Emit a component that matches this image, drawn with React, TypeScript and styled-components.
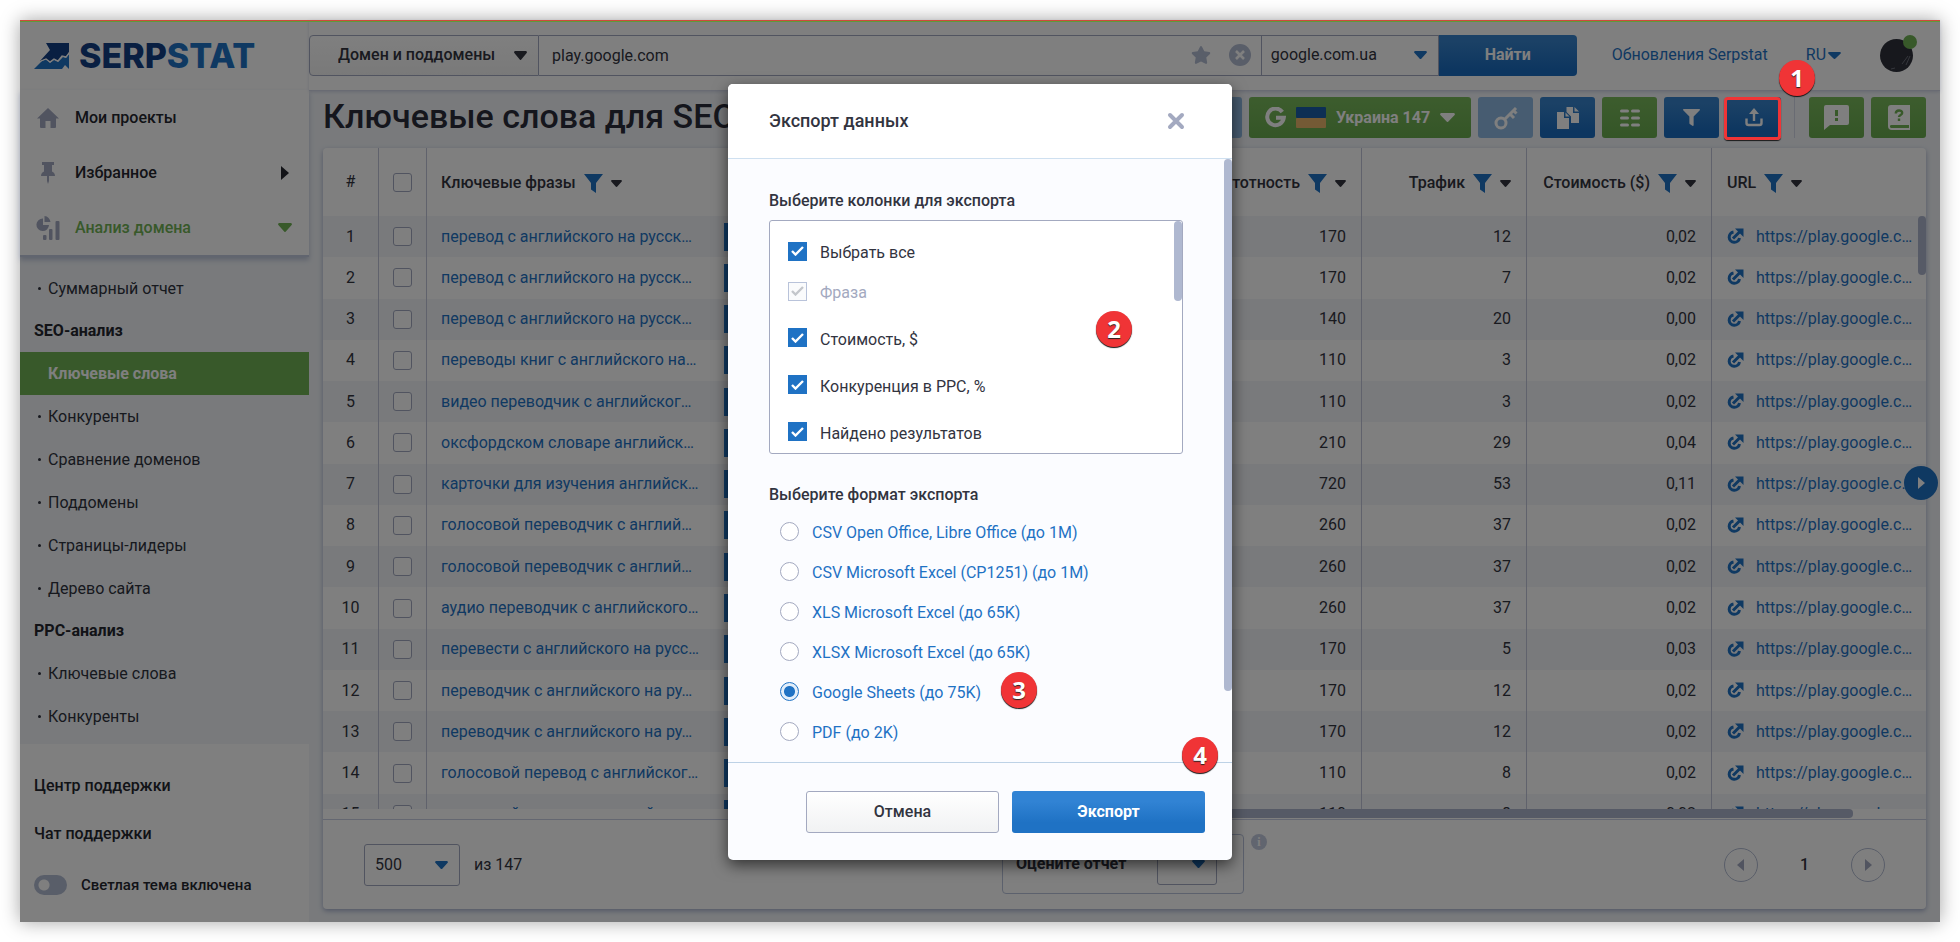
import React from "react";
import styled, { createGlobalStyle, css } from "styled-components";
import { FaStar, FaFilter } from "react-icons/fa";

const c = {
  text: "#32343f",
  muted: "#a3a9c0",
  line: "#d3d7e6",
  blue: "#1f72c4",
  green: "#70b254",
  page: "#f2f5f9",
};

const GlobalStyle = createGlobalStyle`
  *, *::before, *::after { box-sizing: border-box; }
  body { margin: 0; background: #fff; color: ${c.text}; font: 400 16px/20px Roboto, "Liberation Sans", sans-serif; }
  button, input, select { font: inherit; color: inherit; }
  button { cursor: pointer; padding: 0; border: 0; background: none; }
  a { color: ${c.blue}; text-decoration: none; }
  h1, h2, p, ul { margin: 0; padding: 0; }
  ul { list-style: none; }
`;

const Frame = styled.div`
  position: relative;
  display: flex;
  height: calc(100vh - 40px);
  margin: 20px;
  background: ${c.page};
  box-shadow: 0 0 18px rgba(0, 0, 0, 0.36);
`;

const Sidebar = styled.aside`
  display: flex;
  flex-direction: column;
  flex: 0 0 289px;
  background: #fff;
  > * { flex: none; }
`;

const Logo = styled.a`
  display: flex;
  align-items: center;
  gap: 9px;
  height: 70px;
  padding: 2px 14px 0;
  font: 800 34px/40px Inter, Roboto, sans-serif;
  color: #123f85;
  svg { flex: none; }
  b { font-weight: 800; color: #1f72c4; }
`;

const MainNav = styled.nav`
  border-bottom: 2px solid #c3cade;
  box-shadow: 0 3px 5px rgba(110, 125, 170, 0.4);
  z-index: 1;
`;

const MainLink = styled.a<{ $active?: boolean }>`
  display: flex;
  align-items: center;
  height: 55px;
  padding: 0 17px 0 16px;
  font-weight: 500;
  color: ${(p) => (p.$active ? c.green : "#25272f")};
  > svg { flex: 0 0 24px; margin-right: 15px; color: ${c.muted}; }
  > span { flex: 1; }
`;

const ArrowSlot = styled.i`
  display: flex;
  justify-content: center;
  width: 14px;
`;

const SubNav = styled.nav`
  height: 487px;
  padding-top: 10px;
  background: ${c.page};
`;

const SubTitle = styled.h2`
  padding: 0 14px;
  font: 700 16px/42px Roboto, sans-serif;
  color: #25272f;
`;

const SubLink = styled.a<{ $active?: boolean }>`
  display: flex;
  align-items: center;
  height: 43px;
  padding-left: 18px;
  color: #2f323d;
  &::before { content: ""; width: 3px; height: 3px; margin-right: 7px; border-radius: 50%; background: currentColor; }
  ${(p) => p.$active && css`
    color: #fff;
    font-weight: 700;
    background: ${c.green};
    &::before { background: transparent; }
  `}
`;

const Support = styled.div`
  display: flex;
  flex-direction: column;
  padding: 18px 14px 0;
  a { font-weight: 500; line-height: 48px; color: #25272f; }
`;

const Toggle = styled.label`
  display: flex;
  align-items: center;
  gap: 14px;
  height: 54px;
  font-weight: 500;
  font-size: 15px;
  color: #25272f;
  input {
    appearance: none;
    width: 33px;
    height: 20px;
    margin: 0;
    border-radius: 10px;
    background: radial-gradient(circle at 10px 10px, #fff 5px, #b3bcd2 6px);
  }
`;

const Main = styled.main`
  display: flex;
  flex-direction: column;
  flex: 1;
  min-width: 0;
`;

const Header = styled.header`
  display: flex;
  align-items: center;
  height: 71px;
  padding-right: 27px;
  background: #fff;
  border-bottom: 1px solid ${c.line};
  box-shadow: 0 1px 3px rgba(110, 125, 170, 0.25);
`;

const Search = styled.form`
  display: flex;
  flex: 1;
  height: 41px;
  margin-right: 35px;
`;

const selectBase = css`
  appearance: none;
  border: 1px solid ${c.muted};
  border-radius: 0;
  background: #fff;
  outline: 0;
`;

const SelectWrap = styled.div`
  position: relative;
  display: flex;
  > svg { position: absolute; right: 12px; top: 50%; margin-top: -4px; pointer-events: none; }
`;

const ScopeSelect = styled.select`
  ${selectBase}
  width: 230px;
  padding: 0 28px;
  font-weight: 500;
  border-radius: 4px 0 0 4px;
  background: linear-gradient(#fff, #f3f3f3);
`;

const Query = styled.div`
  display: flex;
  align-items: center;
  flex: 1;
  gap: 18px;
  padding-right: 10px;
  border: solid ${c.muted};
  border-width: 1px 0;
  background: #fff;
  color: #b3bcd2;
  input { flex: 1; min-width: 0; height: 100%; padding: 0 13px; border: 0; background: none; outline: 0; color: ${c.text}; }
  button { display: flex; color: inherit; }
`;

const EngineSelect = styled.select`
  ${selectBase}
  width: 178px;
  padding: 0 9px;
`;

const SubmitButton = styled.button`
  width: 138px;
  border-radius: 0 4px 4px 0;
  background: linear-gradient(#3783cc 15%, #1a6cc0 85%);
  color: #fff;
  font-weight: 700;
`;

const Lang = styled.button`
  display: flex;
  align-items: center;
  gap: 2px;
  margin: 0 39px 0 38px;
  color: ${c.blue};
`;

const Avatar = styled.div`
  position: relative;
  width: 33px;
  height: 33px;
  svg { display: block; }
  &::after { content: ""; position: absolute; right: -4px; top: -4px; width: 14px; height: 14px; border-radius: 50%; background: ${c.green}; }
`;

const Content = styled.div`
  position: relative;
  display: flex;
  flex-direction: column;
  flex: 1;
  min-height: 0;
  padding: 0 14px 13px;
`;

const TitleRow = styled.div`
  display: flex;
  align-items: center;
  flex: 0 0 57px;
  gap: 7px;
  padding-bottom: 4px;
  h1 { flex: 1; min-width: 0; height: 48px; overflow: hidden; font: 500 34px/44px Roboto, sans-serif; white-space: nowrap; color: #2b2d3a; }
`;

const Tool = styled.button<{ $tone?: "blue" | "green" | "light" }>`
  display: flex;
  align-items: center;
  justify-content: center;
  width: 55px;
  height: 41px;
  border-radius: 3px;
  color: #fff;
  background: ${(p) =>
    p.$tone === "green" ? "linear-gradient(#7aba5c, #69ab4e)" : p.$tone === "light" ? "#8fb9e2" : "linear-gradient(#3783cc 15%, #1a6cc0 85%)"};
`;

const RegionButton = styled(Tool)`
  width: 222px;
  gap: 10px;
  font-weight: 700;
  white-space: nowrap;
`;

const Divider = styled.span`
  width: 1px;
  height: 41px;
  margin: 0 7px 0 6px;
  background: ${c.line};
`;

const Highlighted = styled.div`
  position: relative;
  &::after {
    content: "";
    position: absolute;
    inset: 0 0 -2px -2px;
    z-index: 20;
    border: 3px solid #f03436;
    border-radius: 4px;
    box-shadow: 0 1px 1px rgba(0, 0, 0, 0.8);
    pointer-events: none;
  }
`;

const Step = styled.span<{ $right: number; $top: number }>`
  position: absolute;
  right: ${(p) => p.$right}px;
  top: ${(p) => p.$top}px;
  z-index: 30;
  width: 36px;
  height: 36px;
  border-radius: 50%;
  background: #f03436;
  box-shadow: 0 1px 1px #111;
  color: #fff;
  font: 700 24px/36px "Open Sans", Roboto, sans-serif;
  text-align: center;
  text-shadow: 0 1px 1px #222;
`;

const Card = styled.section`
  display: flex;
  flex-direction: column;
  flex: 1;
  min-height: 0;
  border-radius: 4px;
  background: #fff;
  box-shadow: 0 2px 5px rgba(90, 105, 160, 0.5);
`;

const Scroller = styled.div`
  position: relative;
  flex: 1;
  min-height: 0;
  overflow: hidden;
`;

const Grid = styled.table`
  width: 100%;
  height: 687px;
  table-layout: fixed;
  border-collapse: separate;
  border-spacing: 0;
  th { height: 68px; padding: 0 15px; font-weight: 500; text-align: left; white-space: nowrap; border-right: 1px solid #c0c5d8; }
  td { padding: 0 15px; border-right: 1px solid #c0c5d8; white-space: nowrap; }
  tbody tr:nth-child(odd) td { background: ${c.page}; }
  th:nth-child(1), th:nth-child(2), td:nth-child(1), td:nth-child(2) { padding: 0; text-align: center; }
  th:nth-child(1) { font-weight: 400; }
  th:nth-child(3), td:nth-child(3) { padding-left: 14px; }
  th:nth-child(3), th:nth-child(4), td:nth-child(3), td:nth-child(4), th:last-child, td:last-child { border-right: 0; }
  td:nth-child(n + 5):nth-child(-n + 7), th:nth-child(n + 5):nth-child(-n + 7) { text-align: right; }
  td:last-child { padding-right: 0; }
`;

const HeadCell = styled.span`
  display: inline-flex;
  align-items: center;
  gap: 8px;
  padding-top: 2px;
  svg:first-of-type { color: ${c.blue}; }
`;

const TickBox = styled.input`
  appearance: none;
  display: block;
  width: 19px;
  height: 19px;
  margin: 0 auto;
  border: 1px solid ${c.muted};
  border-radius: 3px;
  background: #fff;
`;

const Phrase = styled.div`
  display: flex;
  align-items: center;
  justify-content: space-between;
`;

const AddButton = styled.button`
  width: 28px;
  height: 28px;
  background: ${c.blue};
`;

const UrlCell = styled.div`
  display: flex;
  align-items: center;
  gap: 12px;
  color: ${c.blue};
`;

const VThumb = styled.span`
  position: absolute;
  right: 0;
  top: 68px;
  width: 8px;
  height: 59px;
  border-radius: 4px;
  background: #adb5cd;
`;

const HTrack = styled.div`
  flex: 0 0 10px;
  padding: 0 73px 0 480px;
  &::before { content: ""; display: block; height: 9px; border-radius: 4px; background: #adb5cd; }
`;

const TableFooter = styled.footer`
  position: relative;
  display: flex;
  align-items: center;
  flex: 0 0 90px;
  gap: 14px;
  padding: 0 41px;
  border-top: 1px solid #c9cfe2;
`;

const PageSize = styled.select`
  ${selectBase}
  width: 96px;
  height: 42px;
  padding: 0 10px;
  border-radius: 3px;
`;

const Rate = styled.label`
  position: absolute;
  left: 679px;
  top: 14px;
  display: flex;
  align-items: center;
  justify-content: space-between;
  width: 242px;
  height: 60px;
  padding: 0 26px 0 13px;
  border: 1px solid #b9c3da;
  border-radius: 4px;
  font-weight: 700;
`;

const RateSelect = styled.select`
  ${selectBase}
  width: 60px;
  height: 42px;
  border-radius: 3px;
`;

const Info = styled.span`
  position: absolute;
  left: 928px;
  top: 14px;
  width: 16px;
  height: 16px;
  border-radius: 50%;
  background: #c3cade;
  color: #fff;
  font: 700 12px/16px "Liberation Serif", serif;
  text-align: center;
`;

const Pager = styled.nav`
  display: flex;
  align-items: center;
  gap: 42px;
  margin-left: auto;
  font-weight: 500;
  button { display: flex; align-items: center; justify-content: center; width: 34px; height: 34px; border: 1px solid #b3bcd2; border-radius: 50%; color: #a3a9c0; }
`;

const Floating = styled.button`
  position: absolute;
  right: 2px;
  top: 375px;
  display: flex;
  align-items: center;
  justify-content: center;
  width: 34px;
  height: 34px;
  border-radius: 50%;
  background: ${c.blue};
  color: #fff;
`;

const Overlay = styled.div`
  position: absolute;
  inset: 0;
  z-index: 10;
  display: flex;
  justify-content: center;
  align-items: flex-start;
  padding-top: 64px;
  background: rgba(0, 0, 0, 0.5);
`;

const TopLine = styled.div`
  position: absolute;
  inset: 0 0 auto;
  z-index: 11;
  height: 2px;
  background: linear-gradient(#cf4a3c 50%, #5f9a3a 50%);
`;

const Modal = styled.section`
  width: 504px;
  border-radius: 5px;
  background: #fbfcff;
  box-shadow: 0 5px 15px rgba(0, 0, 0, 0.6);
`;

const ModalHead = styled.header`
  display: flex;
  align-items: center;
  justify-content: space-between;
  height: 75px;
  padding: 0 47px 0 41px;
  border-bottom: 1px solid #cfe0f0;
  border-radius: 5px 5px 0 0;
  background: #fff;
  h2 { font: 500 18px/24px Roboto, sans-serif; }
  button { display: flex; color: ${c.muted}; }
`;

const ModalBody = styled.div`
  position: relative;
  height: 604px;
  padding: 30px 49px 0 41px;
  border-bottom: 1px solid #bdd2e6;
`;

const BodyThumb = styled.span`
  position: absolute;
  right: 0;
  top: 0;
  width: 8px;
  height: 532px;
  border-radius: 4px;
  background: #afb8d0;
`;

const Legend = styled.h2`
  font: 500 16px/24px Roboto, sans-serif;
`;

const Columns = styled.div`
  position: relative;
  height: 234px;
  margin: 7px 0 29px;
  padding: 10px 14px;
  overflow: hidden;
  border: 1px solid ${c.muted};
  border-radius: 3px;
  background: #fff;
`;

const ColumnsThumb = styled.i`
  position: absolute;
  right: 0;
  top: 0;
  width: 8px;
  height: 80px;
  border-radius: 4px;
  background: #afb8d0;
`;

const CheckGroup = styled.div`
  padding: 0 4px 3px;
`;

const Check = styled.label<{ $tall?: boolean; $off?: boolean }>`
  display: flex;
  align-items: center;
  gap: 13px;
  height: ${(p) => (p.$tall ? 47 : 40)}px;
  color: ${(p) => (p.$off ? "#a3a9c0" : c.text)};
  span { padding-top: 4px; }
  input {
    appearance: none;
    width: 19px;
    height: 19px;
    margin: 0;
    border: 1px solid ${(p) => (p.$off ? "#b9c3da" : c.blue)};
    background: ${(p) => (p.$off ? "#fafbfc" : c.blue)};
  }
  svg { position: absolute; left: 21px; color: ${(p) => (p.$off ? "#c3c6cb" : "#fff")}; pointer-events: none; }
`;

const Formats = styled.div`
  padding: 4px 11px 0;
`;

const Radio = styled.label`
  display: flex;
  align-items: center;
  gap: 13px;
  height: 40px;
  color: ${c.blue};
  span { padding-top: 4px; }
  input {
    appearance: none;
    width: 19px;
    height: 19px;
    margin: 0;
    border: 1px solid ${c.muted};
    border-radius: 50%;
    background: #fff;
  }
  input:checked { border-color: ${c.blue}; background: radial-gradient(circle, ${c.blue} 5px, #e2eefa 6px); }
`;

const ModalFoot = styled.footer`
  position: relative;
  display: flex;
  justify-content: flex-end;
  gap: 13px;
  padding: 28px 27px 27px;
`;

const Action = styled.button<{ $primary?: boolean }>`
  width: 193px;
  height: 42px;
  border: 1px solid ${(p) => (p.$primary ? "transparent" : c.muted)};
  border-radius: 3px;
  font-weight: ${(p) => (p.$primary ? 700 : 500)};
  color: ${(p) => (p.$primary ? "#fff" : c.text)};
  background: ${(p) => (p.$primary ? "linear-gradient(#3183d4 25%, #1f72c4 75%) border-box" : "linear-gradient(#fff, #f1f2f3)")};
`;

const Caret = ({ w = 12, h = 7, color = c.blue }: { w?: number; h?: number; color?: string }) => (
  <svg width={w} height={h} viewBox="0 0 12 7" preserveAspectRatio="none" fill={color} aria-hidden="true">
    <path d="M1 0h10a1 1 0 0 1 .7 1.6L6.9 6.5a1.2 1.2 0 0 1-1.8 0L.3 1.6A1 1 0 0 1 1 0z" />
  </svg>
);

const Side = ({ left, w = 6, h = 10 }: { left?: boolean; w?: number; h?: number }) => (
  <svg width={w} height={h} viewBox="0 0 6 10" preserveAspectRatio="none" fill="currentColor" aria-hidden="true">
    <path d={left ? "M6 0v10L0 5z" : "M0 0v10l6-5z"} />
  </svg>
);

const LogoMark = () => (
  <svg width="36" height="26" viewBox="0 0 36 26" aria-hidden="true">
    <path fill="#123f85" d="M12 0h23v9l-3 5-4-1-4 5-4-2-4 3-4-3-6 2 10-11z" />
    <path fill="#1f72c4" d="M0 26l8-8 4-2 4 4 4-3 4 2 5-5 3 1 3-4v15l-4-4-3 4z" />
    <path fill="none" stroke="#fff" strokeWidth="1.3" d="M7 18l5-2 4 3 4-3 4 2 4-5 4 1 4-5" />
  </svg>
);

const HomeIcon = () => (
  <svg width="24" height="24" viewBox="0 0 24 24" fill="currentColor" aria-hidden="true">
    <path d="M12 2L23 12.500h-3V21a1 1 0 0 1-1 1h-4.500v-7h-5v7H5a1 1 0 0 1-1-1v-8.500H1z" />
  </svg>
);

const PinIcon = () => (
  <svg width="24" height="24" viewBox="0 0 24 24" fill="currentColor" aria-hidden="true">
    <path d="M6 1h12v3h-2v6.500a5 5 0 0 1 3 4.500h-6v5l-1 3-1-3v-5H5a5 5 0 0 1 3-4.500V4H6z" />
  </svg>
);

const ChartIcon = () => (
  <svg width="24" height="24" viewBox="0 0 24 24" fill="currentColor" aria-hidden="true">
    <path d="M7 2.500V9h6a6.300 6.300 0 1 1-6-6.500z" />
    <path d="M8.500 0a6.500 6.500 0 0 1 6 6h-6z" />
    <rect x="7" y="19" width="3.500" height="5" rx="1" />
    <rect x="13" y="13" width="3.500" height="11" rx="1" />
    <rect x="19.500" y="5" width="4" height="19" rx="1" />
  </svg>
);

const Tick = () => (
  <svg width="13" height="10" viewBox="0 0 13 10" fill="none" stroke="currentColor" strokeWidth="2.4" aria-hidden="true">
    <path d="M1 5l3.500 3.500L12 1" />
  </svg>
);

const UrlIcon = () => (
  <svg width="17" height="17" viewBox="0 0 17 17" fill="none" stroke="currentColor" strokeWidth="3" aria-hidden="true">
    <path d="M6.500 4A5.200 5.200 0 1 0 12.500 10" />
    <path d="M6 10.500l7-7" />
    <path d="M8 0.500h8.500V9z" fill="currentColor" stroke="none" />
  </svg>
);

const KeyIcon = () => (
  <svg width="24" height="24" viewBox="0 0 24 24" fill="none" stroke="currentColor" strokeWidth="3" aria-hidden="true">
    <circle cx="7" cy="17" r="5" />
    <path d="M10.500 13.500L22 2" />
    <path d="M16 8l4 4M19.500 4.500l3 3" />
  </svg>
);

const CopyIcon = () => (
  <svg width="22" height="22" viewBox="0 0 22 22" fill="currentColor" aria-hidden="true">
    <path d="M0 5h7v6h5v11H0z" />
    <path d="M8.500 5.500L12.500 9.500h-4z" />
    <path d="M9.500 0H16v6h6v10h-8V9.500L9.500 5z" />
    <path d="M17.500 0L22 4.500h-4.500z" />
  </svg>
);

const ListIcon = () => (
  <svg width="20" height="18" viewBox="0 0 20 18" stroke="currentColor" strokeWidth="3" strokeLinecap="round" aria-hidden="true">
    <path d="M1.500 2h6M12.500 2h6M1.500 9h6M12.500 9h6M1.500 16h6M12.500 16h6" />
  </svg>
);

const ExportIcon = () => (
  <svg width="18" height="19" viewBox="0 0 18 19" fill="none" stroke="currentColor" strokeWidth="2.400" aria-hidden="true">
    <path d="M1.500 10.500V15a2 2 0 0 0 2 2h11a2 2 0 0 0 2-2v-4.500" />
    <path d="M9 13V4" />
    <path d="M4 6l5-6 5 6z" fill="currentColor" stroke="none" />
  </svg>
);

const NoteIcon = () => (
  <svg width="25" height="25" viewBox="0 0 25 25" aria-hidden="true">
    <path fill="currentColor" d="M2 0h21a2 2 0 0 1 2 2v16a2 2 0 0 1-2 2H6l-6 5V2a2 2 0 0 1 2-2z" />
    <path stroke={c.green} strokeWidth="3" d="M12.500 5v6M12.500 13v3" />
  </svg>
);

const BookIcon = () => (
  <svg width="22" height="25" viewBox="0 0 22 25" aria-hidden="true">
    <path fill="currentColor" d="M3 0h19v25H4a4 4 0 0 1-4-4V3a3 3 0 0 1 3-3z" />
    <path fill={c.green} d="M3 20h18v3H4a1.500 1.500 0 0 1-1-3z" />
    <path fill="none" stroke={c.green} strokeWidth="2.400" d="M7.800 8.500c0-4 6.400-4 6.400-.5 0 2-3.200 2-3.200 4M11 13.500v2.500" />
  </svg>
);

const GoogleIcon = () => (
  <svg width="21" height="21" viewBox="0 0 21 21" fill="none" stroke="currentColor" strokeWidth="4" aria-hidden="true">
    <path d="M17.300 5A8.300 8.300 0 1 0 18.800 10.800H11" />
  </svg>
);

const Flag = () => (
  <svg width="30" height="21" viewBox="0 0 30 21" aria-hidden="true">
    <rect width="30" height="11" rx="1" fill="#1a5fa8" />
    <rect y="11" width="30" height="10" rx="1" fill="#e8b56a" />
  </svg>
);

const RoundX = () => (
  <svg width="22" height="22" viewBox="0 0 22 22" aria-hidden="true">
    <circle cx="11" cy="11" r="11" fill="currentColor" />
    <path d="M7 7l8 8M15 7l-8 8" stroke="#fff" strokeWidth="2.600" />
  </svg>
);

const rows: [string, string, string, string][] = [
  ["перевод с английского на русск…", "170", "12", "0,02"],
  ["перевод с английского на русск…", "170", "7", "0,02"],
  ["перевод с английского на русск…", "140", "20", "0,00"],
  ["переводы книг с английского на…", "110", "3", "0,02"],
  ["видео переводчик с английског…", "110", "3", "0,02"],
  ["оксфордском словаре английск…", "210", "29", "0,04"],
  ["карточки для изучения английск…", "720", "53", "0,11"],
  ["голосовой переводчик с англий…", "260", "37", "0,02"],
  ["голосовой переводчик с англий…", "260", "37", "0,02"],
  ["аудио переводчик с английского…", "260", "37", "0,02"],
  ["перевести с английского на русс…", "170", "5", "0,03"],
  ["переводчик с английского на ру…", "170", "12", "0,02"],
  ["переводчик с английского на ру…", "170", "12", "0,02"],
  ["голосовой перевод с английског…", "110", "8", "0,02"],
  ["голосовой перевод с английског…", "110", "8", "0,02"],
];

const formats = [
  "CSV Open Office, Libre Office (до 1M)",
  "CSV Microsoft Excel (CP1251) (до 1M)",
  "XLS Microsoft Excel (до 65K)",
  "XLSX Microsoft Excel (до 65K)",
  "Google Sheets (до 75K)",
  "PDF (до 2K)",
];

const Sortable = ({ children }: { children: React.ReactNode }) => (
  <HeadCell>
    {children}
    <svg width="19" height="19" viewBox="0 0 19 19" fill="currentColor" aria-hidden="true">
      <path d="M0 0h19L12 9v10l-5-3.500V9z" />
    </svg>
    <Caret w={11} h={7} color={c.text} />
  </HeadCell>
);

export default function App() {
  return (
    <>
      <GlobalStyle />
      <Frame>
        <Sidebar>
          <Logo href="#"><LogoMark /><span>SERP<b>STAT</b></span></Logo>
          <MainNav>
            <MainLink href="#"><HomeIcon /><span>Мои проекты</span></MainLink>
            <MainLink href="#"><PinIcon /><span>Избранное</span><ArrowSlot><Side w={8} h={14} /></ArrowSlot></MainLink>
            <MainLink href="#" $active><ChartIcon /><span>Анализ домена</span><ArrowSlot><Caret w={14} h={9} color={c.green} /></ArrowSlot></MainLink>
          </MainNav>
          <SubNav>
            <SubLink href="#">Суммарный отчет</SubLink>
            <SubTitle>SEO-анализ</SubTitle>
            <SubLink href="#" $active>Ключевые слова</SubLink>
            <SubLink href="#">Конкуренты</SubLink>
            <SubLink href="#">Сравнение доменов</SubLink>
            <SubLink href="#">Поддомены</SubLink>
            <SubLink href="#">Страницы-лидеры</SubLink>
            <SubLink href="#">Дерево сайта</SubLink>
            <SubTitle>PPC-анализ</SubTitle>
            <SubLink href="#">Ключевые слова</SubLink>
            <SubLink href="#">Конкуренты</SubLink>
          </SubNav>
          <Support>
            <a href="#">Центр поддержки</a>
            <a href="#">Чат поддержки</a>
            <Toggle><input type="checkbox" />Светлая тема включена</Toggle>
          </Support>
        </Sidebar>

        <Main>
          <Header>
            <Search onSubmit={(e) => e.preventDefault()}>
              <SelectWrap>
                <ScopeSelect aria-label="Тип поиска"><option>Домен и поддомены</option></ScopeSelect>
                <Caret w={13} h={9} color={c.text} />
              </SelectWrap>
              <Query>
                <input aria-label="Домен" defaultValue="play.google.com" />
                <button type="button" aria-label="В избранное"><FaStar size={20} /></button>
                <button type="button" aria-label="Очистить"><RoundX /></button>
              </Query>
              <SelectWrap>
                <EngineSelect aria-label="База"><option>google.com.ua</option></EngineSelect>
                <Caret w={13} h={8} />
              </SelectWrap>
              <SubmitButton>Найти</SubmitButton>
            </Search>
            <a href="#">Обновления Serpstat</a>
            <Lang>RU<Caret w={13} h={7} /></Lang>
            <Avatar>
              <svg width="33" height="33" viewBox="0 0 33 33" aria-hidden="true">
                <circle cx="16.500" cy="16.500" r="16.500" fill="#2e303a" />
                <path d="M22 25l6-8M26 26l4-9M11 30l4-1" stroke="#6a6d78" fill="none" />
              </svg>
            </Avatar>
          </Header>

          <Content>
            <TitleRow>
              <h1>Ключевые слова для SEO</h1>
              <Tool $tone="light" aria-label="Добавить"><ListIcon /></Tool>
              <RegionButton $tone="green"><GoogleIcon /><Flag />Украина 147<Caret w={15} h={9} color="#fff" /></RegionButton>
              <Tool $tone="light" aria-label="Ключ"><KeyIcon /></Tool>
              <Tool aria-label="Копировать"><CopyIcon /></Tool>
              <Tool $tone="green" aria-label="Колонки"><ListIcon /></Tool>
              <Tool aria-label="Фильтр"><FaFilter size={17} /></Tool>
              <Highlighted>
                <Tool aria-label="Экспорт"><ExportIcon /></Tool>
                <Step $right={-34} $top={-37}>1</Step>
              </Highlighted>
              <Divider />
              <Tool $tone="green" aria-label="Сообщить"><NoteIcon /></Tool>
              <Tool $tone="green" aria-label="Справка"><BookIcon /></Tool>
            </TitleRow>

            <Card>
              <Scroller>
                <Grid>
                  <colgroup>
                    <col width="56" /><col width="48" /><col width="340" /><col />
                    <col width="220" /><col width="165" /><col width="185" /><col width="214" />
                  </colgroup>
                  <thead>
                    <tr>
                      <th>#</th>
                      <th><TickBox type="checkbox" aria-label="Выбрать все фразы" /></th>
                      <th><Sortable>Ключевые фразы</Sortable></th>
                      <th />
                      <th><Sortable>Частотность</Sortable></th>
                      <th><Sortable>Трафик</Sortable></th>
                      <th><Sortable>Стоимость ($)</Sortable></th>
                      <th><Sortable>URL</Sortable></th>
                    </tr>
                  </thead>
                  <tbody>
                    {rows.map(([phrase, freq, traffic, cost], i) => (
                      <tr key={i}>
                        <td>{i + 1}</td>
                        <td><TickBox type="checkbox" aria-label={`Строка ${i + 1}`} /></td>
                        <td><Phrase><a href="#">{phrase}</a><AddButton aria-label="Добавить фразу" /></Phrase></td>
                        <td />
                        <td>{freq}</td>
                        <td>{traffic}</td>
                        <td>{cost}</td>
                        <td><UrlCell><UrlIcon /><a href="#">https://play.google.c…</a></UrlCell></td>
                      </tr>
                    ))}
                  </tbody>
                </Grid>
                <VThumb />
              </Scroller>
              <HTrack />
              <TableFooter>
                <SelectWrap>
                  <PageSize aria-label="Строк на странице"><option>500</option></PageSize>
                  <Caret w={13} h={8} />
                </SelectWrap>
                <span>из 147</span>
                <Rate>
                  Оцените отчет
                  <SelectWrap><RateSelect><option /></RateSelect><Caret w={13} h={8} /></SelectWrap>
                </Rate>
                <Info>i</Info>
                <Pager>
                  <button aria-label="Назад"><Side left w={7} h={12} /></button>
                  <span>1</span>
                  <button aria-label="Вперёд"><Side w={7} h={12} /></button>
                </Pager>
              </TableFooter>
            </Card>
            <Floating aria-label="Открыть панель"><Side w={7} h={12} /></Floating>
          </Content>
        </Main>

        <Overlay>
          <Modal role="dialog" aria-label="Экспорт данных">
            <ModalHead>
              <h2>Экспорт данных</h2>
              <button aria-label="Закрыть">
                <svg width="18" height="18" viewBox="0 0 18 18" stroke="currentColor" strokeWidth="4" strokeLinecap="round" aria-hidden="true">
                  <path d="M3 3l12 12M15 3L3 15" />
                </svg>
              </button>
            </ModalHead>
            <ModalBody>
              <Legend>Выберите колонки для экспорта</Legend>
              <Columns>
                <CheckGroup>
                  <Check><input type="checkbox" defaultChecked /><Tick /><span>Выбрать все</span></Check>
                  <Check $off><input type="checkbox" defaultChecked disabled /><Tick /><span>Фраза</span></Check>
                </CheckGroup>
                <CheckGroup>
                  <Check $tall><input type="checkbox" defaultChecked /><Tick /><span>Стоимость, $</span></Check>
                  <Check $tall><input type="checkbox" defaultChecked /><Tick /><span>Конкуренция в PPC, %</span></Check>
                  <Check $tall><input type="checkbox" defaultChecked /><Tick /><span>Найдено результатов</span></Check>
                </CheckGroup>
                <ColumnsThumb />
                <Step $right={50} $top={90}>2</Step>
              </Columns>
              <Legend>Выберите формат экспорта</Legend>
              <Formats>
                {formats.map((label, i) => (
                  <Radio key={label}>
                    <input type="radio" name="format" defaultChecked={i === 4} />
                    <span>{label}</span>
                  </Radio>
                ))}
              </Formats>
              <BodyThumb />
              <Step $right={195} $top={513}>3</Step>
            </ModalBody>
            <ModalFoot>
              <Action>Отмена</Action>
              <Action $primary>Экспорт</Action>
              <Step $right={14} $top={-26}>4</Step>
            </ModalFoot>
          </Modal>
        </Overlay>
        <TopLine />
      </Frame>
    </>
  );
}
